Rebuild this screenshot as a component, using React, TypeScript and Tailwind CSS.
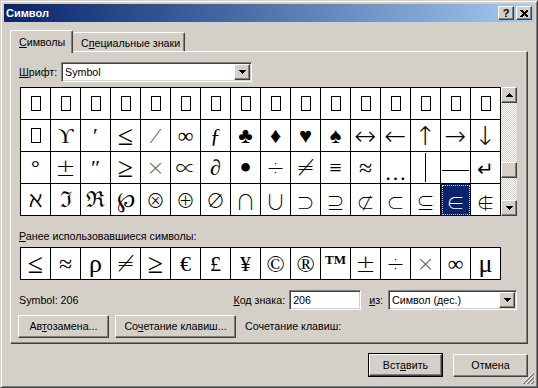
import React from "react";

const ui = "font-['Liberation_Sans',Arial,sans-serif] text-[10.7px] leading-[13px] text-black";
const serif = "font-['Liberation_Serif','DejaVu_Serif',serif]";
const thin = "font-['DejaVu_Sans',sans-serif] font-extralight";
const cjk = "font-['Noto_Sans_CJK_JP','DejaVu_Sans',sans-serif] font-light";

const raised =
  "bg-[#d4d0c8] border border-t-white border-l-white border-r-[#404040] border-b-[#404040] shadow-[inset_-1px_-1px_0_#808080]";
const sunken =
  "bg-white border border-t-[#808080] border-l-[#808080] border-r-white border-b-white shadow-[inset_1px_1px_0_#404040,inset_-1px_-1px_0_#d4d0c8]";
const checker =
  "bg-[image:repeating-conic-gradient(#d4d0c8_0%_25%,#ffffff_0%_50%)] bg-[length:2px_2px]";

function Arrow({ up }: { up?: boolean }) {
  return (
    <svg width="7" height="4" viewBox="0 0 7 4" shapeRendering="crispEdges">
      {up ? (
        <>
          <rect x="3" y="0" width="1" height="1" />
          <rect x="2" y="1" width="3" height="1" />
          <rect x="1" y="2" width="5" height="1" />
          <rect x="0" y="3" width="7" height="1" />
        </>
      ) : (
        <>
          <rect x="0" y="0" width="7" height="1" />
          <rect x="1" y="1" width="5" height="1" />
          <rect x="2" y="2" width="3" height="1" />
          <rect x="3" y="3" width="1" height="1" />
        </>
      )}
    </svg>
  );
}

function Combo({ value, width }: { value: string; width: string }) {
  return (
    <div className={`${sunken} ${width} h-[20px] p-[1px] flex items-center`}>
      <span className="flex-1 pl-[2px]">{value}</span>
      <div className={`${raised} w-[16px] h-full flex items-center justify-center`}>
        <Arrow />
      </div>
    </div>
  );
}

const BOX = "box";
const grid: string[][] = [
  Array(16).fill(BOX),
  [BOX, "ϒ", "′", "≤", "⁄", "∞", "ƒ", "♣", "♦", "♥", "♠", "↔", "←", "↑", "→", "↓"],
  ["°", "±", "″", "≥", "×", "∝", "∂", "•", "÷", "≠", "≡", "≈", "…", "vbar", "hbar", "↵"],
  ["ℵ", "ℑ", "ℜ", "℘", "⊗", "⊕", "∅", "∩", "∪", "⊃", "⊇", "⊄", "⊂", "⊆", "∈", "∉"],
];
const recent = ["≤", "≈", "ρ", "≠", "≥", "€", "£", "¥", "©", "®", "TM", "±", "÷", "×", "∞", "μ"];

// per-glyph tweaks so the fallback fonts look like the Symbol face
const look: Record<string, string> = {
  "≤": `${serif} text-[28px]`,
  "≥": `${serif} text-[28px]`,
  "⁄": `${serif} text-[22px] text-[#555]`,
  "×": `${thin} text-[22px] text-[#666]`,
  "÷": `${thin} text-[22px]`,
  "≠": `${thin} text-[22px]`,
  "≡": `${serif} text-[22px]`,
  "≈": `${serif} text-[24px]`,
  "±": `${thin} text-[24px]`,
  "∝": `${cjk} text-[20px]`,
  "↔": `${thin} text-[26px]`,
  "←": `${thin} text-[26px]`,
  "↑": `${thin} text-[26px]`,
  "→": `${thin} text-[26px]`,
  "↓": `${thin} text-[26px]`,
  "↵": `${cjk} text-[20px]`,
  "•": `${serif} text-[36px]`,
  "…": `${serif} text-[22px] mt-[10px]`,
  "⊗": `${cjk} text-[19px]`,
  "⊕": `${cjk} text-[19px]`,
  "∅": `${cjk} text-[19px]`,
  "∩": `${cjk} text-[20px] mt-[4px]`,
  "∪": `${cjk} text-[20px] mt-[4px]`,
  "⊃": `${cjk} text-[18px] mt-[5px]`,
  "⊇": `${cjk} text-[18px] mt-[5px]`,
  "⊄": `${cjk} text-[18px] mt-[5px]`,
  "⊂": `${cjk} text-[18px] mt-[5px]`,
  "⊆": `${cjk} text-[18px] mt-[5px]`,
  "∈": `${cjk} text-[18px] mt-[5px]`,
  "∉": `${cjk} text-[18px] mt-[5px]`,
  "©": `${serif} text-[24px]`,
  "®": `${serif} text-[24px]`,
  "μ": `${serif} text-[26px]`,
  "ρ": `${serif} text-[26px]`,
};

function Glyph({ v }: { v: string }) {
  if (v === BOX) return <div className="w-[10px] h-[15px] border border-black" />;
  if (v === "vbar") return <div className="w-px h-[29px] bg-black" />;
  if (v === "hbar") return <div className="h-px w-[27px] bg-black mt-[6px]" />;
  if (v === "TM")
    return <span className={`${serif} font-bold text-[13px] self-start mt-[5px]`}>TM</span>;
  return <span className={`${look[v] ?? `${serif} text-[22px]`} leading-none`}>{v}</span>;
}

function Cell({ v, selected }: { v: string; selected?: boolean }) {
  return (
    <div
      className={`h-[32px] border-r border-b border-black flex items-center justify-center ${
        selected ? "bg-[#0a246a] text-white outline-1 outline-dotted outline-[#c8c8ff] -outline-offset-2" : "bg-white"
      }`}
    >
      <Glyph v={v} />
    </div>
  );
}

function Button({ label, width }: { label: React.ReactNode; width: string }) {
  return (
    <div className={`${raised} ${width} h-[23px] flex items-center justify-center`}>{label}</div>
  );
}

export default function App() {
  return (
    <div
      className={`${ui} relative w-[538px] h-[388px] bg-[#d4d0c8] border border-t-[#d4d0c8] border-l-[#d4d0c8] border-r-[#404040] border-b-[#404040] shadow-[inset_1px_1px_0_#ffffff,inset_-1px_-1px_0_#808080] p-[3px] flex flex-col`}
    >
      {/* title bar */}
      <div className="h-[18px] flex items-center bg-linear-to-r from-[#0a246a] to-[#a6caf0] px-[2px]">
        <span className="flex-1 text-white font-bold text-[11px]">Символ</span>
        <div className="flex gap-[2px]">
          <div className={`${raised} w-[16px] h-[14px] flex items-center justify-center font-bold leading-none text-[11px]`}>?</div>
          <div className={`${raised} w-[16px] h-[14px] flex items-center justify-center`}>
            <svg width="8" height="7" viewBox="0 0 8 7" shapeRendering="crispEdges">
              <path d="M0 0h2l2 2 2-2h2v1l-2.5 2.5L8 6v1H6L4 5 2 7H0V6l2.5-2.5L0 1z" />
            </svg>
          </div>
        </div>
      </div>

      <div className="px-[6px] pt-[8px] flex flex-col">
        {/* tabs */}
        <div className="flex items-end h-[21px]">
          <div className="relative z-10 h-[23px] -mb-[2px] w-[63px] bg-[#d4d0c8] border-t border-l border-r border-t-white border-l-white border-r-[#404040] shadow-[inset_-1px_0_0_#808080] rounded-t-[2px] pl-[8px] pt-[5px]">
            <span className="underline">С</span>имволы
          </div>
          <div className="h-[19px] w-[112px] border-t border-r border-t-white border-r-[#404040] shadow-[inset_-1px_0_0_#808080] rounded-t-[2px] pl-[8px] pt-[4px] whitespace-nowrap">
            С<span className="underline">п</span>ециальные знаки
          </div>
        </div>

        {/* panel */}
        <div className="h-[293px] border border-t-white border-l-white border-r-[#404040] border-b-[#404040] shadow-[inset_-1px_-1px_0_#808080] pl-[8px] pr-[10px] pt-[10px] flex flex-col">
          <div className="flex items-center h-[20px]">
            <span className="w-[42px]">
              <span className="underline">Ш</span>рифт:
            </span>
            <Combo value="Symbol" width="w-[191px]" />
          </div>

          <div className="flex mt-[5px]">
            <div className="ml-[1px] grid grid-cols-[repeat(16,30px)] border-l border-t border-black">
              {grid.map((row, r) =>
                row.map((v, c) => <Cell key={`${r}-${c}`} v={v} selected={r === 3 && c === 14} />)
              )}
            </div>
            <div className="w-[16px] flex flex-col">
              <div className={`${raised} h-[16px] flex items-center justify-center`}>
                <Arrow up />
              </div>
              <div className={`h-[59px] ${checker}`} />
              <div className={`${raised} h-[16px]`} />
              <div className={`flex-1 ${checker}`} />
              <div className={`${raised} h-[16px] flex items-center justify-center`}>
                <Arrow />
              </div>
            </div>
          </div>

          <div className="mt-[14px]">
            <span className="underline">Р</span>анее использовавшиеся символы:
          </div>
          <div className="mt-[4px] ml-[1px] grid grid-cols-[repeat(16,30px)] w-fit border-l border-t border-black">
            {recent.map((v, i) => (
              <Cell key={i} v={v} />
            ))}
          </div>

          <div className="mt-[10px] flex items-center h-[20px]">
            <span className="flex-1">Symbol: 206</span>
            <span>
              <span className="underline">К</span>од знака:
            </span>
            <div className={`${sunken} ml-[4px] w-[72px] h-[20px] flex items-center pl-[3px]`}>206</div>
            <span className="ml-[8px]">
              <span className="underline">и</span>з:
            </span>
            <div className="ml-[5px]">
              <Combo value="Символ (дес.)" width="w-[129px]" />
            </div>
          </div>

          <div className="mt-[5px] -ml-[1px] flex items-center gap-[6px]">
            <Button
              width="w-[91px]"
              label={
                <span>
                  Ав<span className="underline">т</span>озамена...
                </span>
              }
            />
            <Button
              width="w-[121px]"
              label={
                <span>
                  Со<span className="underline">ч</span>етание клавиш...
                </span>
              }
            />
            <span className="ml-[3px]">Сочетание клавиш:</span>
          </div>
        </div>

        {/* dialog buttons */}
        <div className="mt-[9px] flex justify-end items-center gap-[10px]">
          <div className="w-[75px] h-[24px] border border-black">
            <div className={`${raised} w-full h-full flex items-center justify-center`}>
              <span>
                Вст<span className="underline">а</span>вить
              </span>
            </div>
          </div>
          <Button width="w-[75px]" label="Отмена" />
        </div>
      </div>

      {/* size grip */}
      <svg className="absolute right-[2px] bottom-[2px]" width="12" height="12" viewBox="0 0 12 12" shapeRendering="crispEdges">
        <path d="M11 0L0 11M11 4L4 11M11 8L8 11" stroke="#808080" />
        <path d="M11 1L1 11M11 5L5 11M11 9L9 11" stroke="#808080" />
        <path d="M10 0L-1 11M10 4L3 11M10 8L7 11" stroke="#ffffff" />
      </svg>
    </div>
  );
}
